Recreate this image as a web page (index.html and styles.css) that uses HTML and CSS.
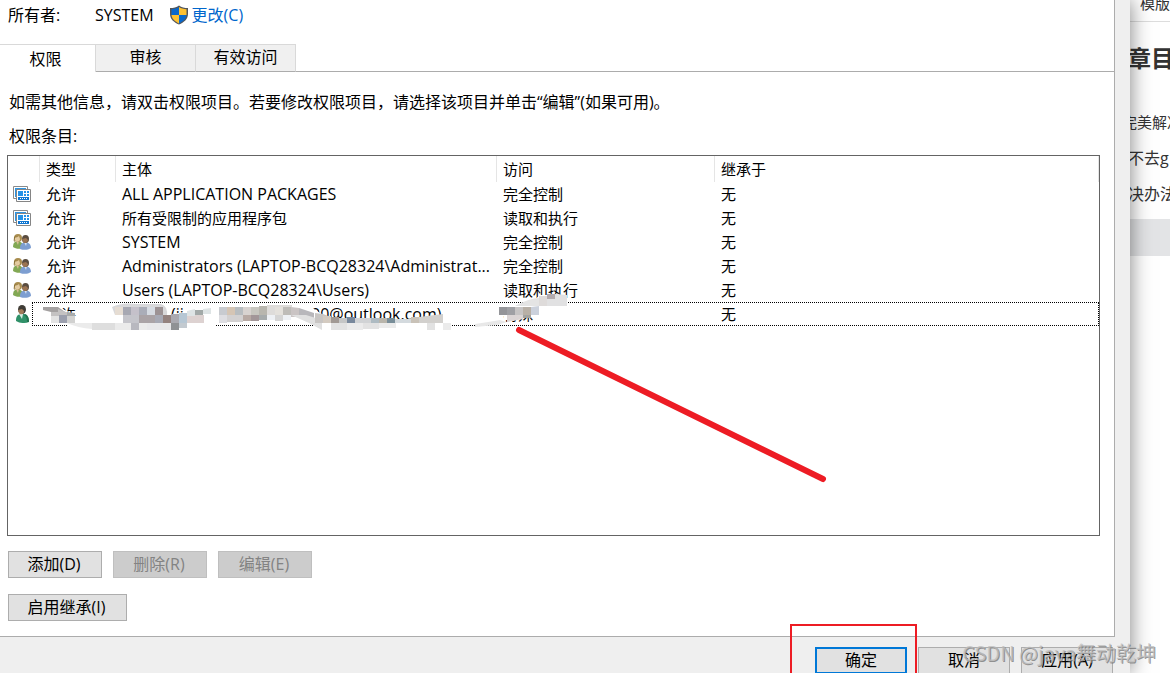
FILE: index.html
```html
<!DOCTYPE html>
<html lang="zh-CN">
<head>
    <meta charset="UTF-8">
    <meta name="viewport" content="width=device-width, initial-scale=1.0">
    <title>高级安全设置</title>
    <link rel="stylesheet" href="styles.css">
</head>
<body>
    <!-- Shared icons -->
    <svg class="sprite" aria-hidden="true">
        <symbol id="icon-package" viewBox="0 0 18 16">
            <path d="M.5 .5h14v12H.5z" fill="#fff" stroke="#8a8a8a"/>
            <path d="M2 2h11v9H2z" fill="#2d95e3"/>
            <path d="M3.500 3.500h14v12h-14z" fill="#fff" stroke="#858585"/>
            <path d="M5 5h5v5H5z" fill="#2492e8"/>
            <path d="M11 5h2v2h-2zM14 5h2v2h-2zM11 8h2v2h-2zM14 8h2v2h-2z" fill="#2492e8"/>
            <path d="M5 11h11v3H5z" fill="#0f76d1"/>
            <path d="M7 12h1v1H7zM9 12h1v1H9zM11 12h1v1h-1zM13 12h1v1h-1z" fill="#fff"/>
        </symbol>
        <symbol id="icon-group" viewBox="0 0 18 16">
            <path d="M0 13c0-3 1-5 3-5.500h3c3 .5 4 3 4 6-3 2-7 1.500-10-.5z" fill="#82a854"/>
            <path d="M3 7h3l-1 4z" fill="#d9bf96"/>
            <ellipse cx="5" cy="4" rx="4" ry="4" fill="#a88c4e"/>
            <path d="M2 3c1 1 3 0 4-1l1 3c0 3-4 4-5 1z" fill="#e3cba1"/>
            <path d="M1 3c0 3-1 4 1 5-1-3 0-5 2-6z" fill="#8c7339"/>
            <path d="M7 15c0-4 1-6 4-6.500h3c3 .5 4 3 4 5.500-3 2-7 2.500-11 1z" fill="#7d9ed1"/>
            <path d="M11 8h3l-1 4z" fill="#d8e2ef"/>
            <ellipse cx="12.500" cy="5" rx="3.500" ry="4" fill="#5a4d40"/>
            <path d="M9 5l4-1 2 2c0 3-4 4-5 2z" fill="#9b7452"/>
        </symbol>
        <symbol id="icon-user" viewBox="0 0 14 18">
            <path d="M1 16c0-4 1-6 4-7h4c4 1 5 4 5 8-4 1.500-9 1.500-13-1z" fill="#309169"/>
            <path d="M4 9h4l-1 5z" fill="#d6eadf"/>
            <path d="M9 10c2 1 3 3 3 7h2c0-4-1-7-4-8z" fill="#21734f"/>
            <ellipse cx="7" cy="4.500" rx="4" ry="4.500" fill="#3f3c36"/>
            <path d="M3 5l4-1 2 2c0 4-4 4-5 2z" fill="#a27a58"/>
        </symbol>
    </svg>

    <main class="desktop">
        <section class="dialog">
            <div class="panel">
                <div class="owner">
                    <span class="owner-label">所有者:</span>
                    <span class="owner-name">SYSTEM</span>
                    <a href="#" class="owner-change">
                        <svg class="shield" viewBox="0 0 20 20" aria-hidden="true">
                            <path d="M10 .5C7.500 2.500 4.500 3 1 3v6c0 5 4 8.500 9 10.500 5-2 9-5.500 9-10.500V3C15.500 3 12.500 2.500 10 .5z" fill="#53565a"/>
                            <path d="M10 2C8 3.500 5.500 4 2.500 4.300V10H10z" fill="#0868cc"/>
                            <path d="M10 2c2 1.500 4.500 2 7.500 2.300V10H10z" fill="#fdc131"/>
                            <path d="M2.500 10c.5 4 3.500 6.500 7.500 8.400V10z" fill="#fdc131"/>
                            <path d="M17.500 10c-.5 4-3.500 6.500-7.500 8.400V10z" fill="#0868cc"/>
                        </svg>
                        <span>更改(C)</span>
                    </a>
                </div>

                <div class="tabs" role="tablist">
                    <button class="tab active" role="tab" aria-selected="true">权限</button>
                    <button class="tab" role="tab" aria-selected="false">审核</button>
                    <button class="tab" role="tab" aria-selected="false">有效访问</button>
                </div>

                <div class="content">
                    <p class="info">如需其他信息，请双击权限项目。若要修改权限项目，请选择该项目并单击“编辑”(如果可用)。</p>
                    <p class="list-label" id="listLabel">权限条目:</p>

                    <div class="entries">
                        <table aria-labelledby="listLabel">
                            <colgroup>
                                <col class="col-icon">
                                <col class="col-type">
                                <col class="col-principal">
                                <col class="col-access">
                                <col>
                            </colgroup>
                            <thead>
                                <tr><th></th><th>类型</th><th>主体</th><th>访问</th><th>继承于</th></tr>
                            </thead>
                            <tbody>
                                <tr>
                                    <td><svg class="icon"><use href="#icon-package"/></svg></td>
                                    <td>允许</td><td class="latin">ALL APPLICATION PACKAGES</td><td>完全控制</td><td>无</td>
                                </tr>
                                <tr>
                                    <td><svg class="icon"><use href="#icon-package"/></svg></td>
                                    <td>允许</td><td>所有受限制的应用程序包</td><td>读取和执行</td><td>无</td>
                                </tr>
                                <tr>
                                    <td><svg class="icon"><use href="#icon-group"/></svg></td>
                                    <td>允许</td><td class="latin">SYSTEM</td><td>完全控制</td><td>无</td>
                                </tr>
                                <tr>
                                    <td><svg class="icon"><use href="#icon-group"/></svg></td>
                                    <td>允许</td><td class="latin">Administrators (LAPTOP-BCQ28324\Administrat...</td><td>完全控制</td><td>无</td>
                                </tr>
                                <tr>
                                    <td><svg class="icon"><use href="#icon-group"/></svg></td>
                                    <td>允许</td><td class="latin">Users (LAPTOP-BCQ28324\Users)</td><td>读取和执行</td><td>无</td>
                                </tr>
                                <tr class="focused">
                                    <td><svg class="icon"><use href="#icon-user"/></svg></td>
                                    <td>允许</td><td class="latin account"><span>(ji</span><span>00@outlook.com)</span></td><td>特殊</td><td>无</td>
                                </tr>
                            </tbody>
                        </table>

                        <!-- Mosaic over the private account and the red pointer line -->
                        <svg class="markup" viewBox="30 290 820 200" aria-hidden="true">
                            <path d="M44 304h14l2 4 7 3 9 5v7H44zM113 304h57l2 22h-57zM172 314l36-6 8 2v18h-44zM216 304h84l14 5 17 11h112v10H330l-12-7H216z" fill="#fff"/>
                            <path d="M68 323h148v6H68zM314 323h136v7H314zM474 323l26-4v6h-26z" fill="#fff"/>
                            <path d="M498 305l34-3 8-7h27v9l-30 6v5l-24 5h-8z" fill="#fff"/>
                            <path d="M43 307h15l7 5h-14l-8-2z" fill="#a4a1a1"/>
                            <path d="M58 309l8 3 9 2v2H51v-4h7z" fill="#c4c2c2"/>
                            <path d="M51 316h8v7h-8zM67 316h8v7h-8z" fill="#e3e3e3"/>
                            <path d="M59 315h8v8h-8z" fill="#9b9fad"/>
                            <path d="M67 312l8 1v3h-8z" fill="#a9abab"/>
                            <path d="M67 316h8v7h-8z" fill="#d1d1d0"/>
                            <path d="M67 323h25v6q-14-1-25-6z" fill="#ebebeb"/>
                            <path d="M92 323h23v7H92z" fill="#dedede"/>
                            <path d="M115 323h41v7h-41z" fill="#ebebeb"/>
                            <path d="M112 307q10-5 24-3h25q7 2 6 12l-8 7h-36v-8h-8z" fill="#d8d8da"/>
                            <path d="M115 307h8v8h-8z" fill="#e6ddd3"/>
                            <path d="M123 307h8v8h-8z" fill="#a7a8b2"/>
                            <path d="M131 307h8v8h-8z" fill="#c5c1ca"/>
                            <path d="M139 307h8v8h-8z" fill="#aaadb8"/>
                            <path d="M147 307h8v8h-8z" fill="#d6dbe2"/>
                            <path d="M155 307h8v8h-8z" fill="#9c9294"/>
                            <path d="M123 315h16v8h-16z" fill="#c5c5cb"/>
                            <path d="M139 315h16v8h-16z" fill="#aaa3a6"/>
                            <path d="M155 315h8v8h-8z" fill="#a7a9b4"/>
                            <path d="M163 315h8v8h-8z" fill="#94827f"/>
                            <path d="M171 314h8v9h-8z" fill="#aaa9b0"/>
                            <path d="M179 313h8v10h-8z" fill="#b6c7d4"/>
                            <path d="M187 315h17v8h-17z" fill="#ddd2d1"/>
                            <path d="M131 323h8v7h-8z" fill="#b8b8bf"/>
                            <path d="M147 323h24v7h-24z" fill="#e8e8ea"/>
                            <path d="M171 323h8v7h-8z" fill="#8f9194"/>
                            <path d="M179 323h8v5h-8z" fill="#c3cad0"/>
                            <path d="M187 311l8-2v7h-8zM203 309l8-1v6h-8z" fill="#dee4e5"/>
                            <path d="M195 310h8v5h-8z" fill="#a2a9a8"/>
                            <path d="M219 307h8v8h-8z" fill="#c8cbd0"/>
                            <path d="M227 307h8v8h-8z" fill="#d5c5b4"/>
                            <path d="M235 307h8v8h-8z" fill="#b8bdc0"/>
                            <path d="M243 307h8v8h-8z" fill="#d8d3d0"/>
                            <path d="M251 307h8v8h-8z" fill="#c7c6bf"/>
                            <path d="M259 306h8v9h-8z" fill="#b8b6ae"/>
                            <path d="M267 305h25v10h-25z" fill="#dedcda"/>
                            <path d="M275 307h8v8h-8z" fill="#e4e1dc"/>
                            <path d="M283 307h8v8h-8z" fill="#bebcb8"/>
                            <path d="M291 307l8 1v9h-8z" fill="#cac4c4"/>
                            <path d="M299 308l15 5v10l-15-7z" fill="#b8b7bb"/>
                            <path d="M219 315h8v8h-8z" fill="#dedee2"/>
                            <path d="M227 315h16v7h-16z" fill="#d3d1d1"/>
                            <path d="M243 315h8v6h-8z" fill="#b8aaa4"/>
                            <path d="M251 315h8v6h-8z" fill="#a29698"/>
                            <path d="M259 315h8v5h-8z" fill="#a6abac"/>
                            <path d="M267 315h24v5h-24z" fill="#eef1f5"/>
                            <path d="M275 315h8v6h-8z" fill="#d5d5d5"/>
                            <path d="M291 315h15l16 5v10l-13-7z" fill="#e0e0e0"/>
                            <path d="M315 313l8 1 8 3v6h-16z" fill="#c8c5c3"/>
                            <path d="M323 316h8v7h-8z" fill="#d4cbc1"/>
                            <path d="M331 317h8v6h-8z" fill="#a19994"/>
                            <path d="M339 318h8v5h-8z" fill="#c5c6c6"/>
                            <path d="M347 317h8v6h-8z" fill="#78889c"/>
                            <path d="M355 318h16v5h-16z" fill="#d1d3d5"/>
                            <path d="M371 318h8v5h-8z" fill="#aebbc2"/>
                            <path d="M379 318h8v5h-8z" fill="#b9b5ab"/>
                            <path d="M387 318h8v5h-8z" fill="#788d98"/>
                            <path d="M395 319h16v4h-16z" fill="#d4dade"/>
                            <path d="M411 317h8v6h-8z" fill="#c9c2b8"/>
                            <path d="M419 317l16-2 8-1v9h-24z" fill="#d2d0cd"/>
                            <path d="M331 323h16v7h-16zM363 323h16v6h-16zM427 323h8v7h-8z" fill="#e2e2e2"/>
                            <path d="M347 323h16v7h-16zM379 323h17v5h-17zM443 323h8v7h-8z" fill="#ebebeb"/>
                            <path d="M475 324q14-2 25-4l7 2-10 3-22 2z" fill="#e8e8e8"/>
                            <path d="M499 307h8v8h-8z" fill="#949599"/>
                            <path d="M507 307h8v8h-8z" fill="#9fa0a4"/>
                            <path d="M515 307h8v8h-8z" fill="#c6c4c4"/>
                            <path d="M523 307h8v8h-8z" fill="#b8b0a6"/>
                            <path d="M531 307l8-1v9h-8z" fill="#cbd1dc"/>
                            <path d="M507 315h16v4l-16 3z" fill="#dbd5d5"/>
                            <path d="M523 315h8v3h-8z" fill="#a3a39f"/>
                            <path d="M515 306q15-8 24-8v8z" fill="#e4e4e4"/>
                            <path d="M539 296h8v10h-8z" fill="#dedbda"/>
                            <path d="M547 294h8v6h-8z" fill="#b2aaad"/>
                            <path d="M555 294l12 1v11h-20v-7h8z" fill="#e1e1e2"/>
                            <path d="M519 330l304 149" stroke="#ed1c24" stroke-width="6" stroke-linecap="round" fill="none"/>
                        </svg>
                    </div>

                    <div class="actions">
                        <button>添加(D)</button>
                        <button disabled>删除(R)</button>
                        <button disabled>编辑(E)</button>
                    </div>
                    <div class="actions">
                        <button class="wide">启用继承(I)</button>
                    </div>
                </div>
            </div>

            <footer class="footer">
                <button class="primary">确定</button>
                <button>取消</button>
                <button>应用(A)</button>
                <span class="highlight"></span>
            </footer>
        </section>

        <!-- Page behind the dialog -->
        <article class="page">
            <div class="page-bar">模版</div>
            <h1>章目</h1>
            <p class="toc">完美解决</p>
            <p>不去g</p>
            <p>决办法</p>
            <div class="code"></div>
        </article>

        <div class="watermark">CSDN @java舞动乾坤</div>
    </main>
</body>
</html>
```

FILE: styles.css
```css
* {
    margin: 0;
    padding: 0;
    box-sizing: border-box;
}

body {
    background-color: #fff;
    color: #000;
    font-family: "Open Sans", "Noto Sans CJK SC", sans-serif;
    font-size: 16px;
    line-height: 20px;
    overflow: hidden;
}

button {
    font: inherit;
    color: inherit;
}

.sprite {
    display: none;
}

.desktop {
    position: relative;
    display: flex;
    height: 100vh;
    overflow: hidden;
}

/* Dialog */
.dialog {
    position: relative;
    z-index: 1;
    flex: 1;
    display: flex;
    flex-direction: column;
    min-width: 0;
    background-color: #efefef;
    box-shadow: 0 0 20px rgba(0, 0, 0, 0.5);
}

.panel {
    flex: none;
    margin-right: 15px;
    background-color: #fff;
    border-right: 1px solid #acacac;
    border-bottom: 1px solid #acacac;
}

.owner {
    display: flex;
    align-items: center;
    height: 44px;
    padding: 0 8px 14px;
}

.owner-label {
    width: 87px;
}

.owner-change {
    display: flex;
    align-items: center;
    gap: 3px;
    margin-left: 15px;
    color: #0066cc;
    text-decoration: none;
}

.shield {
    width: 20px;
    height: 20px;
}

.tabs {
    display: flex;
    height: 28px;
    box-shadow: inset 0 -1px #acacac;
}

.tab {
    width: 100px;
    padding-bottom: 2px;
    background-color: #f0f0f0;
    border: 1px solid #d9d9d9;
    border-left: none;
    border-bottom-color: #acacac;
}

.tab.active {
    width: 96px;
    padding: 0 4px 0 0;
    background-color: #fff;
    border-bottom: none;
}

.content {
    padding: 20px 14px 15px 7px;
}

.info,
.list-label {
    padding-left: 2px;
}

.list-label {
    margin-top: 14px;
    margin-bottom: 9px;
}

/* Permission entries */
.entries {
    position: relative;
    min-height: 381px;
    margin-bottom: 15px;
    border: 1px solid #646464;
}

table {
    width: 100%;
    table-layout: fixed;
    border-collapse: separate;
    border-spacing: 0;
    font-size: 15px;
    line-height: 24px;
    white-space: nowrap;
}

.col-icon {
    width: 32px;
}

.col-type {
    width: 76px;
}

.col-principal {
    width: 381px;
}

.col-access {
    width: 218px;
}

th {
    height: 26px;
    padding-left: 6px;
    border-right: 1px solid #e5e5e5;
    font-weight: normal;
    text-align: left;
}

td {
    height: 24px;
    padding-left: 6px;
    overflow: hidden;
}

td:first-child {
    padding-left: 5px;
}

.latin {
    font-size: 16px;
}

.icon {
    display: block;
    width: 18px;
    height: 18px;
}

.account span:first-child {
    display: inline-block;
    width: 189px;
    padding-left: 49px;
}

.focused {
    position: relative;
}

.focused td:first-child::after {
    content: "";
    position: absolute;
    top: 0;
    right: 0;
    bottom: 0;
    left: 24px;
    border: 1px dotted #000;
}

.markup {
    position: absolute;
    top: 134px;
    left: 22px;
    width: 820px;
    height: 200px;
}

/* Buttons */
.actions {
    display: flex;
    gap: 11px;
    padding-left: 1px;
}

.actions + .actions {
    margin-top: 16px;
}

.actions button,
.footer button {
    width: 94px;
    height: 27px;
    padding: 0 2px 2px 0;
    background-color: #e1e1e1;
    border: 1px solid #adadad;
}

.actions button:disabled {
    background-color: #cccccc;
    border-color: #bfbfbf;
    color: #838383;
}

.actions .wide {
    width: 119px;
}

.footer {
    position: relative;
    display: flex;
    justify-content: flex-end;
    gap: 11px;
    padding: 10px 17px;
}

.footer button {
    width: 92px;
    padding: 0 0 2px;
}

.footer .primary {
    border: 2px solid #0078d7;
}

.highlight {
    position: absolute;
    top: -13px;
    right: 213px;
    width: 127px;
    height: 70px;
    border: 2px solid #ed1c24;
}

/* Page behind */
.page {
    width: 40px;
    color: #333;
    white-space: nowrap;
}

.page-bar {
    height: 22px;
    padding-left: 10px;
    border-bottom: 1px solid #ddd;
    font-size: 15px;
    line-height: 6px;
}

.page h1 {
    margin: 20px 0 0 -2px;
    font-size: 23px;
    line-height: 32px;
}

.page p {
    margin: 16px 0 0 -2px;
}

.page .toc {
    margin: 38px 0 0 -8px;
    font-size: 15px;
}

.code {
    height: 37px;
    margin-top: 15px;
    background-color: #e3e4e6;
}

.watermark {
    position: absolute;
    z-index: 2;
    right: 14px;
    bottom: 5px;
    color: rgba(190, 190, 190, 0.8);
    font-family: "Noto Sans CJK SC", sans-serif;
    font-size: 20px;
    line-height: 30px;
    text-shadow: 1px 1px rgba(90, 90, 90, 0.6);
}
```
